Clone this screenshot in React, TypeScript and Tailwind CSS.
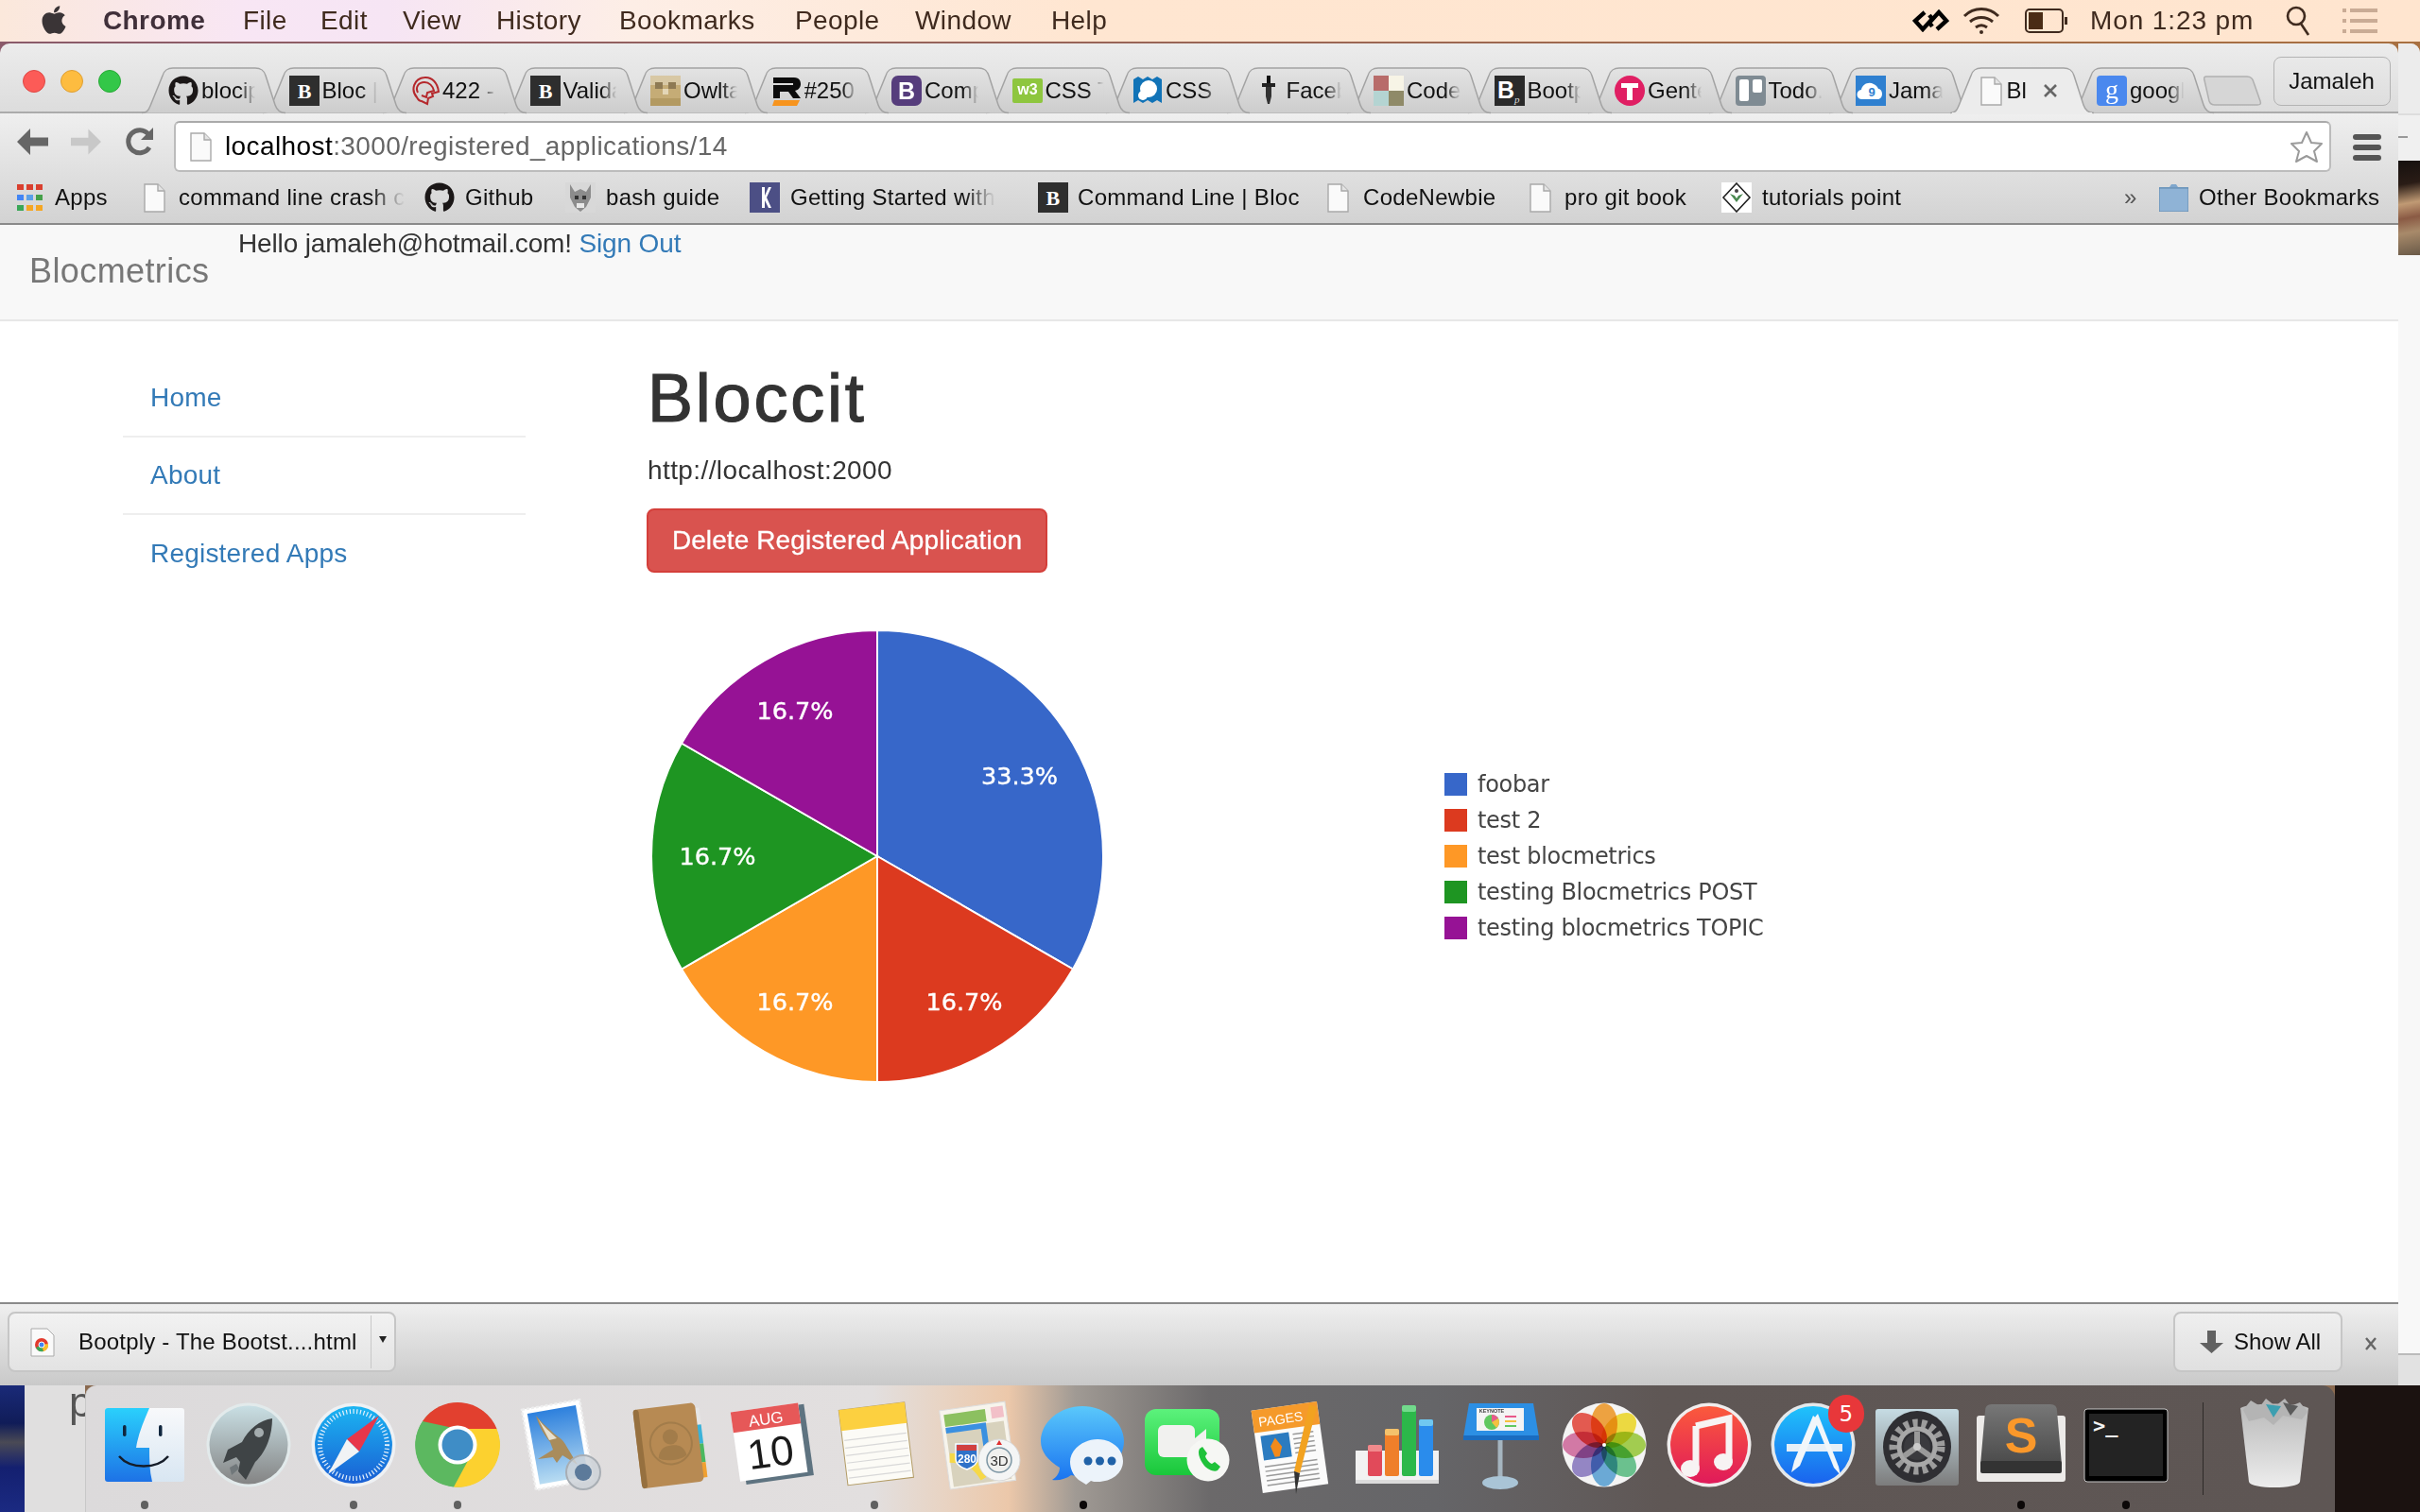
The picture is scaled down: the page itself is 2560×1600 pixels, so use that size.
import React from "react";
import { FaApple, FaGithub } from "react-icons/fa";

const Fav = ({ k }: { k: string }) => {
  const s = { width: 32, height: 32, viewBox: "0 0 32 32", className: "flex-none" };
  switch (k) {
    case "gh":
      return <FaGithub className="flex-none w-[32px] h-[32px] text-[#1b1717]" />;
    case "b":
      return (
        <svg {...s}>
          <rect width="32" height="32" fill="#2e2e2e" />
          <text x="16" y="24" textAnchor="middle" fontSize="22" fontWeight="700" fill="#fff" fontFamily="Liberation Serif">B</text>
        </svg>
      );
    case "422":
      return (
        <svg {...s} fill="none" stroke="#b5282c" strokeWidth="2">
          <path d="M8 23C1 15 5 3 16 2c8-1 14 6 15 15l-7 2 1 3-5 2-1 6-6-3c-2 0-4-2-5-4z" />
          <path d="M9 18C6 12 10 7 16 7c5 0 9 4 10 9l-7 2-1 5-5-2" />
        </svg>
      );
    case "owl":
      return (
        <svg {...s}>
          <rect width="32" height="32" fill="#c5ac76" />
          <rect x="0" y="0" width="32" height="10" fill="#d8c8a4" />
          <rect x="5" y="7" width="8" height="7" fill="#8e7a54" />
          <rect x="19" y="7" width="8" height="7" fill="#8e7a54" />
          <rect x="13" y="14" width="6" height="6" fill="#e3d6b6" />
          <rect x="0" y="24" width="32" height="8" fill="#b39a62" />
        </svg>
      );
    case "r":
      return (
        <svg {...s}>
          <path d="M2 2h22c6 0 7 4 7 7s-2 6-6 7l6 8h-8l-5-7H9v7H2V10h21V8H2z" fill="#0c0c0c" />
          <path d="M3 26h27l-3 6H1z" fill="#f7941e" />
        </svg>
      );
    case "bs":
      return (
        <svg {...s}>
          <rect width="32" height="32" rx="7" fill="#563d7c" />
          <text x="16" y="25" textAnchor="middle" fontSize="25" fontWeight="700" fill="#fff" fontFamily="Liberation Sans">B</text>
        </svg>
      );
    case "w3":
      return (
        <svg {...s}>
          <rect width="32" height="26" y="3" rx="2" fill="#8ec63f" />
          <text x="16" y="20" textAnchor="middle" fontSize="16" fontWeight="700" fill="#fff" fontFamily="Liberation Sans">w3</text>
        </svg>
      );
    case "css":
      return (
        <svg {...s}>
          <path d="M1 4l5-3 5 3 5-3 5 3 5-3 5 3v25l-5-3-5 3-5-3-5 3-5-3-5 3z" fill="#1173b7" />
          <circle cx="17" cy="14" r="9" fill="#fff" />
          <circle cx="11" cy="21" r="5" fill="#fff" />
        </svg>
      );
    case "drop":
      return (
        <svg {...s}>
          <rect x="14" y="0" width="4" height="9" fill="#111" />
          <rect x="9" y="8" width="14" height="4" fill="#222" />
          <path d="M13 12h6v10l-2 8h-2l-2-8z" fill="#333" />
        </svg>
      );
    case "code":
      return (
        <svg {...s}>
          <rect width="16" height="16" fill="#b86c6a" />
          <rect x="16" width="16" height="16" fill="#f7f4e6" />
          <rect y="16" width="16" height="16" fill="#b4d4d2" />
          <rect x="16" y="16" width="16" height="16" fill="#8f8a68" />
        </svg>
      );
    case "bp":
      return (
        <svg {...s}>
          <rect width="32" height="32" fill="#2a2a2a" />
          <text x="3" y="24" fontSize="25" fontWeight="700" fill="#fff" fontFamily="Liberation Sans">B</text>
          <text x="21" y="29" fontSize="11" fontStyle="italic" fill="#ddd" fontFamily="Liberation Serif">p</text>
        </svg>
      );
    case "t":
      return (
        <svg {...s}>
          <circle cx="16" cy="16" r="16" fill="#e01f63" />
          <path d="M7 8h18v5h-6v13h-6V13H7z" fill="#fff" />
        </svg>
      );
    case "trello":
      return (
        <svg {...s}>
          <rect width="32" height="32" rx="4" fill="#7f8b93" />
          <rect x="4" y="4" width="10" height="23" rx="2" fill="#fff" />
          <rect x="18" y="4" width="10" height="14" rx="2" fill="#fff" />
        </svg>
      );
    case "cloud":
      return (
        <svg {...s}>
          <rect width="32" height="32" fill="#2f80d0" />
          <path d="M7 25a5 5 0 0 1-1-10c1-6 8-9 13-6 3 1 4 3 5 5 5 0 6 11-1 11z" fill="#fff" />
          <text x="17" y="22" textAnchor="middle" fontSize="13" fontWeight="700" fill="#2f80d0" fontFamily="Liberation Sans">9</text>
        </svg>
      );
    case "doc":
      return <Doc />;
    case "g":
      return (
        <svg {...s}>
          <rect width="32" height="32" rx="4" fill="#4a88ee" />
          <text x="16" y="24" textAnchor="middle" fontSize="28" fill="#fff" fontFamily="Liberation Serif">g</text>
        </svg>
      );
    case "bash":
      return (
        <svg {...s}>
          <rect width="32" height="32" fill="#d8d8d8" />
          <path d="M5 2l5 8 6-3 6 3 5-8v14l-5 10-6 5-6-5-5-10z" fill="#8c8c8c" />
          <rect x="10" y="14" width="4" height="4" fill="#333" />
          <rect x="18" y="14" width="4" height="4" fill="#333" />
          <rect x="12" y="22" width="8" height="5" fill="#e8e8e8" />
        </svg>
      );
    case "hexo":
      return (
        <svg {...s}>
          <rect width="32" height="32" fill="#4c4f85" />
          <path d="M13 5h3v9l4-9h3l-5 11 5 11h-3l-4-8v8h-3z" fill="#fff" />
        </svg>
      );
    case "tp":
      return (
        <svg {...s}>
          <rect width="32" height="32" fill="#fff" />
          <path d="M16 1l14 15-14 15L2 16z" fill="#fff" stroke="#222" strokeWidth="1.6" />
          <path d="M9 12l7 9 7-9-5 2-2 3-2-3z" fill="#4b8a52" />
          <circle cx="16" cy="9" r="2" fill="#444" />
        </svg>
      );
    default:
      return null;
  }
};

const Doc = () => (
  <svg width="23" height="31" viewBox="0 0 23 31" className="flex-none">
    <path d="M1 1h14l7 7v22H1z" fill="#fafafa" stroke="#a9a9a9" strokeWidth="1.4" />
    <path d="M15 1v7h7" fill="#e4e4e4" stroke="#a9a9a9" strokeWidth="1.4" />
  </svg>
);

const TABS = [
  ["gh", "blocip"], ["b", "Bloc | "], ["422", "422 - "], ["b", "Valida"], ["owl", "Owlta"], ["r", "#250 "],
  ["bs", "Comp"], ["w3", "CSS T"], ["css", "CSS r"], ["drop", "Faceb"], ["code", "Code"], ["bp", "Bootp"],
  ["t", "Gente"], ["trello", "Todo."], ["cloud", "Jamal"], ["doc", "Bl"], ["g", "googl"],
];

const Tab = ({ k, t, i }: { k: string; t: string; i: number }) => {
  const active = i === 15;
  return (
    <div className="relative flex-none w-[127.5px] h-[50px]" style={{ zIndex: active ? 200 : 100 - i }}>
      <svg width="152" height="50" viewBox="0 0 152 50" className="absolute left-0 top-0">
        <path
          d="M0 48.5C5 48.5 7 46 9 41L22 9C24 3 27 1 33 1H120C126 1 129 3 131 9L141 40C143 46 146 48.5 152 48.5"
          fill={active ? "#ececec" : "url(#tabg)"}
          stroke="#a3a3a3"
          strokeWidth="1.5"
        />
        {active && <rect x="2" y="48" width="148" height="2" fill="#ececec" />}
      </svg>
      <div className="relative flex items-center h-[48px] pl-[28px] pt-[2px]">
        <div className={active ? "w-[32px] flex justify-center" : "w-[32px]"}>
          <Fav k={k} />
        </div>
        <div
          className={
            active
              ? "ml-[0px] w-[30px] whitespace-nowrap text-[24px] text-[#111]"
              : "ml-[3px] w-[72px] whitespace-pre text-[24px] text-[#111] [mask-image:linear-gradient(90deg,#000_62%,transparent_88%)]"
          }
        >
          {t}
        </div>
        {active && (
          <svg width="16" height="16" viewBox="0 0 16 16" className="ml-[8px]">
            <path d="M2 2l12 12M14 2L2 14" stroke="#666" strokeWidth="2.6" />
          </svg>
        )}
      </div>
    </div>
  );
};

const MenuBar = () => (
  <div className="flex-none h-[44px] flex items-center pl-[41px] pr-[45px] text-[28px] tracking-[0.4px] text-[#3f2a1e] bg-[linear-gradient(90deg,#fbe8db_0%,#f8e6f4_10%,#f6e5f4_16%,#fdeee6_26%,#ffe6d1_45%,#ffe5cf_100%)]">
    <div className="w-[68px]">
      <FaApple className="w-[32px] h-[34px] text-[#3a3436] -mt-[2px]" />
    </div>
    <div className="w-[148px] font-bold text-[#40303a]">Chrome</div>
    <div className="w-[82px]">File</div>
    <div className="w-[87px]">Edit</div>
    <div className="w-[99px]">View</div>
    <div className="w-[130px]">History</div>
    <div className="w-[186px]">Bookmarks</div>
    <div className="w-[127px]">People</div>
    <div className="w-[144px]">Window</div>
    <div className="flex-1">Help</div>
    <svg width="39" height="24" viewBox="0 0 39 24" fill="none" stroke="#000" strokeWidth="4.4">
      <path d="M13 3L3 12l8 9 10-11-3-4M26 21l10-9-8-9-10 11 3 4" />
    </svg>
    <svg width="42" height="30" viewBox="0 0 42 30" fill="none" stroke="#3f2a1e" strokeWidth="3" className="ml-[13px]">
      <path d="M3 10c10-10 26-10 36 0M9 16c7-6 17-6 24 0M15 22c4-3 8-3 12 0" />
      <circle cx="21" cy="27" r="2" fill="#3f2a1e" stroke="none" />
    </svg>
    <svg width="46" height="26" viewBox="0 0 46 26" className="ml-[25px]">
      <rect x="1" y="1" width="39" height="24" rx="4" fill="none" stroke="#3f2a1e" strokeWidth="2" />
      <rect x="4" y="4" width="15" height="18" fill="#4a2c16" />
      <rect x="42" y="9" width="3" height="8" fill="#3f2a1e" />
    </svg>
    <div className="ml-[23px] w-[171px] whitespace-nowrap tracking-[0.9px]">Mon 1:23 pm</div>
    <svg width="27" height="32" viewBox="0 0 27 32" fill="none" stroke="#3f2a1e" strokeWidth="2.6" className="ml-[36px]">
      <circle cx="11" cy="11" r="9" />
      <path d="M16 19l8 12" />
    </svg>
    <svg width="37" height="26" viewBox="0 0 37 26" fill="#c9ab95" className="ml-[33px]">
      <rect y="0" width="4" height="4" /><rect x="8" y="0" width="29" height="4" />
      <rect y="11" width="4" height="4" /><rect x="8" y="11" width="29" height="4" />
      <rect y="22" width="4" height="4" /><rect x="8" y="22" width="29" height="4" />
    </svg>
  </div>
);

const TitleRow = () => (
  <div className="flex-none h-[74px] flex pl-[24px] border-b-2 border-[#ababab] relative">
    <div className="flex gap-[16px] mt-[28px] h-[24px]">
      <div className="w-[24px] h-[24px] rounded-full bg-[#fc5b57] border border-[#df4744]" />
      <div className="w-[24px] h-[24px] rounded-full bg-[#fdbc40] border border-[#de9f34]" />
      <div className="w-[24px] h-[24px] rounded-full bg-[#33c748] border border-[#27aa35]" />
    </div>
    <div className="ml-[22px] flex mt-[25px] h-[50px] relative">
      {TABS.map((x, i) => (
        <Tab key={i} k={x[0]} t={x[1]} i={i} />
      ))}
    </div>
    <svg width="64" height="34" viewBox="0 0 64 34" className="ml-[13px] mt-[33px]">
      <path d="M3 2H46C50 2 52 4 53 8L60 28C61 31 60 32 57 32H12C9 32 7 31 6 28L1 6C0 3 1 2 3 2Z" fill="#d6d6d6" stroke="#b0b0b0" strokeWidth="1.5" />
    </svg>
    <div className="ml-[10px] mt-[14px] w-[124px] h-[52px] rounded-[8px] border border-[#b3b3b3] flex items-center justify-center text-[24px] text-[#111]">
      Jamaleh
    </div>
  </div>
);

const Toolbar = () => (
  <div className="flex-none h-[62px] flex items-start pl-[18px] pt-[8px]">
    <svg width="33" height="28" viewBox="0 0 33 28" className="mt-[8px]">
      <path d="M14 0L0 14l14 14V18.500h19v-9H14z" fill="#666" />
    </svg>
    <svg width="32" height="28" viewBox="0 0 33 28" className="ml-[24px] mt-[8px]">
      <path d="M19 0l14 14-14 14V18.500H0v-9h19z" fill="#c8c8c8" />
    </svg>
    <svg width="30" height="30" viewBox="0 0 30 30" fill="none" className="ml-[26px] mt-[7px]">
      <path d="M25 21A12 12 0 1 1 24 7" stroke="#666" strokeWidth="5" />
      <path d="M29 0v13H16z" fill="#666" />
    </svg>
    <div className="ml-[21px] w-[2282px] h-[54px] bg-white rounded-[6px] border-2 border-[#bcbcbc] border-t-[#aaa] flex items-center pl-[15px] pr-[6px]">
      <Doc />
      <div className="ml-[14px] text-[28px] tracking-[0.4px] whitespace-nowrap text-[#666]">
        <span className="text-black">localhost</span>:3000/registered_applications/14
      </div>
      <svg width="36" height="34" viewBox="0 0 36 34" className="ml-auto" fill="#fff" stroke="#9a9a9a" strokeWidth="2">
        <path d="M18 2l5 11 11 1-8 8 3 11-11-6-11 6 3-11-8-8 11-1z" strokeLinejoin="round" />
      </svg>
    </div>
    <div className="ml-[23px] mt-[14px] w-[30px] flex flex-col gap-[5px]">
      <div className="h-[6px] rounded-[3px] bg-[#555]" />
      <div className="h-[6px] rounded-[3px] bg-[#555]" />
      <div className="h-[6px] rounded-[3px] bg-[#555]" />
    </div>
  </div>
);

const Mark = ({ w, slot, icon, children, fade }: { w: string; slot: string; icon: React.ReactNode; children: React.ReactNode; fade?: boolean }) => (
  <div className={`flex-none flex items-center ${w}`}>
    <div className={`flex-none flex items-center ${slot}`}>{icon}</div>
    <div
      className={
        fade
          ? "whitespace-nowrap [mask-image:linear-gradient(90deg,#000_85%,transparent)]"
          : "whitespace-nowrap"
      }
    >
      {children}
    </div>
  </div>
);

const AppsIcon = () => (
  <svg width="27" height="28" viewBox="0 0 27 28">
    {[
      [0, 0, "#d9402f"], [10, 0, "#d9402f"], [20, 0, "#d9402f"],
      [0, 11, "#4285f4"], [10, 11, "#5aa0e8"], [20, 11, "#45a049"],
      [0, 22, "#3aa757"], [10, 22, "#f5a623"], [20, 22, "#f5a623"],
    ].map((r, i) => (
      <rect key={i} x={r[0] as number} y={r[1] as number} width="7" height="6" fill={r[2] as string} />
    ))}
  </svg>
);

const Bookmarks = () => (
  <div className="flex-none h-[56px] flex items-center pl-[18px] border-b-2 border-[#8a8a8a] text-[24px] tracking-[0.3px] text-[#111]">
    <Mark w="w-[134px]" slot="w-[40px]" icon={<AppsIcon />}>Apps</Mark>
    <Mark w="w-[297px]" slot="w-[37px]" icon={<Doc />} fade>command line crash c</Mark>
    <Mark w="w-[149px]" slot="w-[43px]" icon={<Fav k="gh" />}>Github</Mark>
    <Mark w="w-[195px]" slot="w-[43px]" icon={<Fav k="bash" />}>bash guide</Mark>
    <Mark w="w-[305px]" slot="w-[43px]" icon={<Fav k="hexo" />} fade>Getting Started with</Mark>
    <Mark w="w-[306px]" slot="w-[42px]" icon={<Fav k="b" />}>Command Line | Bloc</Mark>
    <Mark w="w-[214px]" slot="w-[38px]" icon={<Doc />}>CodeNewbie</Mark>
    <Mark w="w-[203px]" slot="w-[37px]" icon={<Doc />}>pro git book</Mark>
    <Mark w="w-[426px]" slot="w-[43px]" icon={<Fav k="tp" />}>tutorials point</Mark>
    <div className="w-[37px] text-[#555]">»</div>
    <Mark w="w-[232px]" slot="w-[42px]" icon={
      <svg width="31" height="30" viewBox="0 0 31 30">
        <path d="M0 4h11l2-3h5l2 3h11v26H0z" fill="#7fa6cc" />
        <rect x="0" y="5" width="31" height="25" fill="#8fb3d6" stroke="#5f87ad" />
      </svg>
    }>Other Bookmarks</Mark>
  </div>
);

const LINK = "text-[#337ab7]";

const Slice = ({ d, fill }: { d: string; fill: string }) => <path d={d} fill={fill} stroke="#fff" strokeWidth="2" />;

const Pie = () => {
  const pt = (a: number) => {
    const r = (a * Math.PI) / 180;
    return `${(240 + 239 * Math.sin(r)).toFixed(2)} ${(240 - 239 * Math.cos(r)).toFixed(2)}`;
  };
  const wedge = (a: number, b: number) => `M240 240L${pt(a)}A239 239 0 0 1 ${pt(b)}Z`;
  const lab = [
    [390.5, 155, "33.3%"], [332, 394, "16.7%"], [153, 394, "16.7%"], [71, 240, "16.7%"], [153, 86, "16.7%"],
  ];
  return (
    <svg width="480" height="480" viewBox="0 0 480 480" className="flex-none">
      <Slice d={wedge(0, 120)} fill="#3767c9" />
      <Slice d={wedge(120, 180)} fill="#dc3a1f" />
      <Slice d={wedge(180, 240)} fill="#fe9826" />
      <Slice d={wedge(240, 300)} fill="#1e9522" />
      <Slice d={wedge(300, 360)} fill="#961295" />
      {lab.map((l, i) => (
        <text key={i} x={l[0] as number} y={(l[1] as number) + 9} textAnchor="middle" fontSize="25.500" fill="#fff" stroke="#fff" strokeWidth="0.4" fontFamily="DejaVu Sans">
          {l[2]}
        </text>
      ))}
    </svg>
  );
};

const LEGEND = [
  ["bg-[#3767c9]", "foobar"],
  ["bg-[#dc3a1f]", "test 2"],
  ["bg-[#fe9826]", "test blocmetrics"],
  ["bg-[#1e9522]", "testing Blocmetrics POST"],
  ["bg-[#961295]", "testing blocmetrics TOPIC"],
];

const Page = () => (
  <div className="flex-1 min-h-0 bg-white text-[28px] text-[#333]">
    <div className="h-[102px] bg-[#f8f8f8] border-b-2 border-[#e7e7e7] flex items-start pl-[31px]">
      <div className="w-[221px] mt-[29px] text-[36px] leading-[40px] tracking-[0.4px] text-[#777]">Blocmetrics</div>
      <div className="leading-[40px] tracking-[-0.15px]">
        Hello jamaleh@hotmail.com! <span className={LINK}>Sign Out</span>
      </div>
    </div>
    <div className="flex pl-[130px] pt-[41px]">
      <div className="w-[426px] flex-none tracking-[0.2px]">
        <div className={`h-[82px] pl-[29px] flex items-center border-b-2 border-[#eee] ${LINK}`}>Home</div>
        <div className={`h-[82px] pl-[29px] flex items-center border-b-2 border-[#eee] ${LINK}`}>About</div>
        <div className={`h-[82px] pl-[29px] flex items-center ${LINK}`}>Registered Apps</div>
      </div>
      <div className="ml-[129px]">
        <div className="text-[72px] leading-[80px] tracking-[2.8px] [-webkit-text-stroke:1.2px_#333] text-[#333]">Bloccit</div>
        <div className="mt-[17px] leading-[40px] tracking-[0.4px]">http://localhost:2000</div>
        <div className="mt-[20px] -ml-[1px] w-[424px] h-[68px] rounded-[8px] bg-[#d9534f] border-2 border-[#d43f3a] flex items-center justify-center text-white tracking-[0.1px] [-webkit-text-stroke:0.3px_#fff]">
          Delete Registered Application
        </div>
        <div className="flex mt-[60px] ml-[3px]">
          <Pie />
          <div className="ml-[360px] mt-[152px] font-['DejaVu_Sans'] text-[24px] tracking-[-0.3px] text-[#444]">
            {LEGEND.map((l) => (
              <div key={l[1]} className="h-[38px] flex items-start whitespace-nowrap">
                <div className={`w-[24px] h-[24px] flex-none ${l[0]}`} />
                <div className="ml-[11px] leading-[24px]">{l[1]}</div>
              </div>
            ))}
          </div>
        </div>
      </div>
    </div>
  </div>
);

const DownloadBar = () => (
  <div className="flex-none h-[88px] border-t-2 border-[#8a8a8a] bg-[linear-gradient(180deg,#efefef,#c9c9c9)] flex items-start pl-[8px] pt-[8px] text-[24px] text-[#111]">
    <div className="w-[411px] h-[64px] rounded-[8px] border-2 border-[#c6c6c6] bg-[linear-gradient(180deg,#f2f2f2,#e3e3e3)] flex items-center pl-[22px]">
      <svg width="26" height="31" viewBox="0 0 26 31" className="flex-none">
        <path d="M1 1h17l7 7v22H1z" fill="#fafafa" stroke="#aaa" />
        <circle cx="12" cy="18" r="7" fill="#e33b2e" />
        <path d="M12 18l-6 3a7 7 0 0 0 8 4z" fill="#3aa757" />
        <path d="M12 18l7-1a7 7 0 0 1-5 8z" fill="#fbc02d" />
        <circle cx="12" cy="18" r="3" fill="#4285f4" stroke="#fff" />
      </svg>
      <div className="ml-[25px] w-[309px] whitespace-nowrap tracking-[0.2px]">Bootply - The Bootst....html</div>
      <div className="w-[1px] h-[56px] bg-[#c8c8c8]" />
      <div className="ml-[8px] w-0 h-0 border-l-[4px] border-r-[4px] border-t-[7px] border-l-transparent border-r-transparent border-t-[#222] -mt-[6px]" />
    </div>
    <div className="ml-auto w-[179px] h-[64px] rounded-[8px] border-2 border-[#c6c6c6] bg-[linear-gradient(180deg,#efefef,#e0e0e0)] flex items-center pl-[26px]">
      <svg width="25" height="24" viewBox="0 0 25 24" className="flex-none">
        <path d="M8 0h9v13h8L12.500 24 0 13h8z" fill="#616161" />
      </svg>
      <div className="ml-[11px]">Show All</div>
    </div>
    <svg width="16" height="16" viewBox="0 0 16 16" className="ml-[22px] mr-[21px] mt-[26px] flex-none">
      <path d="M3 2l10 12M13 2L3 14" stroke="#666" strokeWidth="2.4" />
    </svg>
  </div>
);

const S = 110;
const Icon = ({ children }: { children: React.ReactNode }) => (
  <svg width={S} height={S} viewBox="0 0 110 110" className="flex-none overflow-visible">
    {children}
  </svg>
);

const Defs = () => (
  <svg width="0" height="0" className="absolute">
    <defs>
      <linearGradient id="tabg" x1="0" y1="0" x2="0" y2="1"><stop offset="0" stopColor="#e3e3e3" /><stop offset="1" stopColor="#cdcdcd" /></linearGradient>
      <linearGradient id="fL" x1="0" y1="0" x2="0" y2="1"><stop offset="0" stopColor="#2ad0fc" /><stop offset="1" stopColor="#1d72e6" /></linearGradient>
      <linearGradient id="fR" x1="0" y1="0" x2="0" y2="1"><stop offset="0" stopColor="#f8f9fb" /><stop offset="1" stopColor="#d8e6f2" /></linearGradient>
      <linearGradient id="lp" x1="0" y1="0" x2="0" y2="1"><stop offset="0" stopColor="#c9dfe4" /><stop offset="1" stopColor="#848484" /></linearGradient>
      <linearGradient id="sf" x1="0" y1="0" x2="0" y2="1"><stop offset="0" stopColor="#1bb5f2" /><stop offset="1" stopColor="#1a5fd4" /></linearGradient>
      <linearGradient id="msg" x1="0" y1="0" x2="0" y2="1"><stop offset="0" stopColor="#5ac8fb" /><stop offset="1" stopColor="#1a74f0" /></linearGradient>
      <linearGradient id="ft" x1="0" y1="0" x2="0" y2="1"><stop offset="0" stopColor="#5cf27c" /><stop offset="1" stopColor="#19c73a" /></linearGradient>
      <linearGradient id="mus" x1="0" y1="0" x2="0" y2="1"><stop offset="0" stopColor="#fb5a3c" /><stop offset="1" stopColor="#e01a5a" /></linearGradient>
      <linearGradient id="app" x1="0" y1="0" x2="0" y2="1"><stop offset="0" stopColor="#1fc3fb" /><stop offset="1" stopColor="#1a63ee" /></linearGradient>
      <linearGradient id="sys" x1="0" y1="0" x2="0" y2="1"><stop offset="0" stopColor="#c6dce4" /><stop offset="1" stopColor="#7c7c7c" /></linearGradient>
      <linearGradient id="sub" x1="0" y1="0" x2="0" y2="1"><stop offset="0" stopColor="#777" /><stop offset="1" stopColor="#4a4a4a" /></linearGradient>
      <linearGradient id="trash" x1="0" y1="0" x2="0" y2="1"><stop offset="0" stopColor="#b9b9b9" /><stop offset="1" stopColor="#ededed" /></linearGradient>
      <linearGradient id="sky" x1="0" y1="0" x2="0" y2="1"><stop offset="0" stopColor="#2d80dd" /><stop offset="1" stopColor="#b8dcf2" /></linearGradient>
    </defs>
  </svg>
);

const Finder = () => (
  <Icon>
    <rect x="13" y="16" width="84" height="78" rx="3" fill="url(#fR)" />
    <path d="M16 16H60C54 30 48 44 46 58H60C60 70 60 82 63 94H16A3 3 0 0 1 13 91V19A3 3 0 0 1 16 16Z" fill="url(#fL)" />
    <rect x="32" y="34" width="3.500" height="12" rx="1.700" fill="#10263e" />
    <rect x="70" y="34" width="3.500" height="12" rx="1.700" fill="#10263e" />
    <path d="M28 67C40 81 68 81 80 67" fill="none" stroke="#151c28" strokeWidth="2.500" />
  </Icon>
);
const Launch = () => (
  <Icon>
    <circle cx="55" cy="55" r="44.500" fill="#e2eaeb" />
    <circle cx="55" cy="55" r="41.500" fill="url(#lp)" />
    <path d="M80 27C67 29 55 38 48 52L33 60 28 74 42 68 46 73 44 83 52 92 62 73C74 62 80 44 80 27Z" fill="#3f4446" />
    <circle cx="66" cy="42" r="5" fill="#a4acae" />
    <path d="M42 75l-7 4 2 8 8-7z" fill="#70777a" />
  </Icon>
);
const Safari = () => (
  <Icon>
    <circle cx="55" cy="55" r="44.500" fill="#eef1f4" />
    <circle cx="55" cy="55" r="41" fill="url(#sf)" />
    <circle cx="55" cy="55" r="35.500" fill="none" stroke="#e6f1fb" strokeWidth="5" strokeDasharray="1.200 2.500" />
    <path d="M82 24L61 62 48 49Z" fill="#e8364a" />
    <path d="M28 86L61 62 48 49Z" fill="#f1f3f5" />
  </Icon>
);
const Chrome = () => (
  <Icon>
    <circle cx="55" cy="55" r="44.500" fill="#5cb860" />
    <path d="M18 30A44.500 44.500 0 0 1 96.500 38L55 38Z" fill="#e2402f" />
    <path d="M96.500 38A44.500 44.500 0 0 1 51 99.500L68 68 55 38Z" fill="#fcd12f" />
    <path d="M18 30L37 61 51 99.500A44.500 44.500 0 0 1 18 30Z" fill="#5cb860" />
    <circle cx="55" cy="55" r="20.500" fill="#fff" />
    <circle cx="55" cy="55" r="16.500" fill="#3f8dc6" />
  </Icon>
);
const Mail = () => (
  <Icon>
    <g transform="rotate(-10 50 55)">
      <rect x="20" y="12" width="62" height="86" fill="#fff" stroke="#eee" strokeWidth="2.500" strokeDasharray="3 2" />
      <rect x="25" y="17" width="52" height="76" fill="url(#sky)" />
    </g>
    <path d="M28 24C32 38 38 46 43 52L46 60 30 70 46 68 50 74 56 66 72 76 60 56C56 48 50 46 46 42 40 36 34 32 28 24Z" fill="#a98c5c" />
    <path d="M30 27L42 50 50 48C44 42 36 36 30 27Z" fill="#e8e0ce" />
    <circle cx="78" cy="84" r="18" fill="#ccd2d8" fillOpacity="0.850" stroke="#a8aeb4" strokeWidth="2" />
    <circle cx="78" cy="84" r="9" fill="#5c7a9a" />
  </Icon>
);
const Contacts = () => (
  <Icon>
    <g transform="rotate(-7 55 55)">
      <rect x="88" y="20" width="6" height="18" fill="#e6e6e6" />
      <rect x="88" y="38" width="6" height="20" fill="#3bb2d8" />
      <rect x="88" y="58" width="6" height="20" fill="#4bb860" />
      <rect x="88" y="78" width="6" height="16" fill="#f0a030" />
      <rect x="24" y="14" width="66" height="84" rx="5" fill="#b78a53" />
      <rect x="24" y="14" width="6" height="84" rx="3" fill="#96703f" />
      <circle cx="60" cy="54" r="22" fill="none" stroke="#a27c4a" strokeWidth="2" />
      <circle cx="60" cy="47" r="8" fill="#a27c4a" />
      <path d="M45 68c2-10 8-12 15-12s13 2 15 12c-5 5-25 5-30 0z" fill="#a27c4a" />
    </g>
  </Icon>
);
const Calendar = () => (
  <Icon>
    <g transform="rotate(-8 55 55)">
      <rect x="24" y="17" width="72" height="76" fill="#5e7380" />
      <rect x="18" y="15" width="72" height="74" fill="#fff" />
      <rect x="18" y="15" width="72" height="22" fill="#e65858" />
      <text x="54" y="33" textAnchor="middle" fontSize="17" fill="#fff" fontFamily="Liberation Sans">AUG</text>
      <text x="54" y="78" textAnchor="middle" fontSize="44" fill="#1a1a1a" fontFamily="Liberation Sans">10</text>
    </g>
  </Icon>
);
const Notes = () => (
  <Icon>
    <g transform="rotate(-7 55 55)">
      <rect x="22" y="14" width="70" height="80" fill="#fcfbf6" stroke="#b29b64" strokeWidth="1" />
      <rect x="22" y="14" width="70" height="22" fill="#fcd040" />
      {[46, 54, 62, 70, 78, 86].map((y) => (
        <rect key={y} x="24" y={y} width="66" height="1.200" fill="#d8d8d8" />
      ))}
    </g>
  </Icon>
);
const Maps = () => (
  <Icon>
    <g transform="rotate(-8 50 55)">
      <rect x="18" y="14" width="70" height="84" fill="#f7f4ec" stroke="#ddd" />
      <rect x="22" y="19" width="44" height="13" fill="#8cc060" />
      <rect x="72" y="18" width="13" height="12" fill="#f2c0c8" />
      <rect x="22" y="34" width="62" height="62" fill="#d8d2bd" />
      <path d="M22 36h40v34" fill="none" stroke="#3a90e0" strokeWidth="6" />
      <path d="M22 65c20 3 28 12 34 26" fill="none" stroke="#f6d848" strokeWidth="10" />
    </g>
    <path d="M30 54h23v16c0 6-6 9-11 11-6-2-12-5-12-11z" fill="#2f72c8" stroke="#fff" strokeWidth="1.500" />
    <rect x="31" y="55" width="21" height="6" fill="#d04040" />
    <text x="42" y="74" textAnchor="middle" fontSize="12" fontWeight="700" fill="#fff" fontFamily="Liberation Sans">280</text>
    <circle cx="76" cy="71" r="22" fill="#f4f5f5" stroke="#d8d8d8" />
    <circle cx="76" cy="71" r="13" fill="#f0f0ee" stroke="#7d96a4" strokeWidth="1.500" />
    <text x="76" y="77" textAnchor="middle" fontSize="15" fill="#333" fontFamily="Liberation Sans">3D</text>
    <path d="M76 50l3 5h-6z" fill="#e03030" />
  </Icon>
);
const Messages = () => (
  <Icon>
    <path d="M54 14c24 0 44 17 44 37 0 21-20 37-44 37-4 0-8 0-12-1-5 4-13 6-20 5 5-3 8-8 8-13C17 71 10 62 10 51c0-20 20-37 44-37Z" fill="url(#msg)" />
    <path d="M68 54c15 0 27 10 27 23s-12 22-27 22c-3 0-5 0-7-1l-5 4-8-5c-6-5-9-12-9-19 0-13 14-24 29-24Z" transform="translate(2 -5)" fill="#ecf3fa" />
    <circle cx="60" cy="72" r="4.500" fill="#2062a8" />
    <circle cx="72.500" cy="72" r="4.500" fill="#2062a8" />
    <circle cx="85" cy="72" r="4.500" fill="#2062a8" />
  </Icon>
);
const FaceTime = () => (
  <Icon>
    <rect x="10" y="17" width="79" height="70" rx="12" fill="url(#ft)" />
    <rect x="24" y="34" width="39" height="34" rx="6" fill="#f1f1ef" />
    <path d="M63 48l12-10v28l-12-8z" fill="#f1f1ef" />
    <circle cx="77" cy="71" r="22.500" fill="#f6f7f4" />
    <path d="M68 59c-3 5 1 13 5 18 4 4 10 7 14 5l3-4-6-5-3 2c-3-1-6-5-7-8l2-3-5-7z" fill="#1fc23a" />
  </Icon>
);
const Pages = () => (
  <Icon>
    <g transform="rotate(-8 50 55)">
      <rect x="18" y="14" width="70" height="88" fill="#fbfbfb" />
      <rect x="18" y="14" width="70" height="24" fill="#f59a2b" />
      <text x="24" y="32" fontSize="14" fill="#fff" fontFamily="Liberation Sans">PAGES</text>
      <rect x="24" y="42" width="30" height="26" fill="#2b7bc0" />
      <path d="M39 46l6 10-4 10h-5l-3-12z" fill="#f28a1c" />
      {[74, 79, 84, 89, 94].map((y) => (
        <rect key={y} x="24" y={y} width="56" height="1.500" fill="#999" />
      ))}
      {[44, 49, 54, 59, 64].map((y) => (
        <rect key={y} x="58" y={y} width="22" height="1.500" fill="#999" />
      ))}
    </g>
    <path d="M74 12l8 3-18 70-6-2z" fill="#f2a220" />
    <path d="M58 83l6 2-4 22z" fill="#333" />
  </Icon>
);
const Numbers = () => (
  <Icon>
    <rect x="12" y="61" width="88" height="35" fill="#f2f2f2" />
    <rect x="12" y="92" width="88" height="4" fill="#dcdcdc" />
    <rect x="25" y="55" width="15" height="33" rx="2" fill="#e14a5a" />
    <rect x="25" y="55" width="15" height="7" rx="2" fill="#f08a8c" />
    <rect x="43" y="38" width="15" height="50" rx="2" fill="#ef7f2a" />
    <rect x="43" y="38" width="15" height="7" rx="2" fill="#f4c26c" />
    <rect x="61" y="13" width="15" height="75" rx="2" fill="#2cb84a" />
    <rect x="61" y="13" width="15" height="7" rx="2" fill="#72da8c" />
    <rect x="79" y="28" width="15" height="60" rx="2" fill="#2a8cec" />
    <rect x="79" y="28" width="15" height="7" rx="2" fill="#70c8f0" />
  </Icon>
);
const Keynote = () => (
  <Icon>
    <rect x="52.500" y="46" width="5" height="46" fill="#a5b5c0" />
    <ellipse cx="55" cy="95" rx="19" ry="7" fill="#a9c4d6" />
    <path d="M22 11h68l6 36H16z" fill="#2c8fe4" />
    <rect x="16" y="45" width="80" height="5" fill="#1a6cc0" />
    <rect x="30" y="16" width="50" height="24" fill="#f4f4f4" />
    <circle cx="46" cy="31" r="8" fill="#60c860" />
    <path d="M46 31V23a8 8 0 0 1 7 4z" fill="#e85a8a" />
    <path d="M46 31l7-4a8 8 0 0 1-2 10z" fill="#f5c040" />
    <text x="46" y="21" fontSize="5.500" fontWeight="700" fill="#444" fontFamily="Liberation Sans" textAnchor="middle">KEYNOTE</text>
    <rect x="60" y="24" width="12" height="2" fill="#e85a8a" />
    <rect x="60" y="29" width="12" height="2" fill="#f5c040" />
    <rect x="60" y="34" width="12" height="2" fill="#60c860" />
  </Icon>
);
const Photos = () => {
  const cols = ["#f7a030", "#f6e030", "#a0d040", "#60c488", "#60a8dc", "#9080c8", "#d870a4", "#ec4c40"];
  return (
    <Icon>
      <circle cx="55" cy="55" r="44.500" fill="#f4f4f4" />
      {cols.map((c, i) => (
        <ellipse key={c} cx="55" cy="33" rx="14" ry="22" fill={c} fillOpacity="0.900" transform={`rotate(${i * 45} 55 55)`} style={{ mixBlendMode: "multiply" }} />
      ))}
      <circle cx="55" cy="55" r="2" fill="#fff" />
    </Icon>
  );
};
const Music = () => (
  <Icon>
    <circle cx="55" cy="55" r="44.500" fill="#f0eded" />
    <circle cx="55" cy="55" r="41" fill="url(#mus)" />
    <path d="M41 35L76 27V72" fill="none" stroke="#f7f3f3" strokeWidth="7" />
    <path d="M41 35V79" fill="none" stroke="#f7f3f3" strokeWidth="7" />
    <ellipse cx="35" cy="80" rx="10" ry="9" fill="#f7f3f3" />
    <ellipse cx="70" cy="73" rx="10" ry="9" fill="#f7f3f3" />
  </Icon>
);
const AppStore = () => (
  <div className="relative">
    <Icon>
      <circle cx="55" cy="55" r="44.500" fill="#e4e8ea" />
      <circle cx="55" cy="55" r="41" fill="url(#app)" />
      <rect x="27" y="54" width="59" height="8" fill="#e6eff8" />
      <path d="M55 24L35 72l-3 12 9-7 20-48z" fill="#f1f6fa" />
      <path d="M56 27l4-5 22 56 2 9-7-8z" fill="#f1f6fa" />
    </Icon>
    <div className="absolute right-[1px] top-[2px] w-[38px] h-[40px] rounded-full bg-[#e8373a] text-white text-[23px] flex items-center justify-center font-['DejaVu_Sans']">5</div>
  </div>
);
const SysPrefs = () => (
  <Icon>
    <rect x="11" y="17" width="88" height="81" rx="3" fill="url(#sys)" />
    <ellipse cx="55" cy="57" rx="36" ry="38" fill="#2f2f33" />
    <circle cx="55" cy="57" r="24" fill="none" stroke="#9c9c9c" strokeWidth="11" strokeDasharray="5 4" />
    <circle cx="55" cy="57" r="19" fill="none" stroke="#a8a8a8" strokeWidth="5" />
    <circle cx="55" cy="57" r="14" fill="#3a3a3e" />
    <path d="M55 57V41M55 57L41 67M55 57l14 10" stroke="#9a9a9a" strokeWidth="6" />
    <circle cx="55" cy="57" r="4" fill="#ccc" />
  </Icon>
);
const Sublime = () => (
  <Icon>
    <rect x="8" y="24" width="94" height="70" rx="3" fill="#eceae8" />
    <path d="M17 19Q17 12 24 12H86Q93 12 93 19L98 76H12Z" fill="url(#sub)" />
    <rect x="12" y="72" width="86" height="13" rx="2" fill="#333" />
    <text x="55" y="63" textAnchor="middle" fontSize="52" fontWeight="700" fill="#fb982a" fontFamily="Liberation Sans">S</text>
  </Icon>
);
const Terminal = () => (
  <Icon>
    <rect x="11" y="17" width="88" height="77" rx="3" fill="#000" stroke="#c6c6c6" strokeWidth="1" />
    <rect x="16" y="22" width="78" height="66" fill="#232323" />
    <text x="20" y="42" fontSize="22" fontWeight="700" fill="#f4f4f4" fontFamily="DejaVu Sans Mono">&gt;_</text>
  </Icon>
);
const Trash = () => (
  <svg width="90" height="110" viewBox="0 0 90 110" className="flex-none">
    <path d="M9 14C18 8 72 8 81 14L72 92C70 100 20 100 18 92Z" fill="url(#trash)" />
    <path d="M12 16l8-10 10 6 6-8 10 8 10-8 6 8 10-4 8 10-6 8-20-4-10 10-10-8-16 4z" fill="#b4b4b4" />
    <path d="M36 10l8 14 8-12z" fill="#3d9fb0" />
    <path d="M54 8l8 14 8-10z" fill="#5a5a5a" />
  </svg>
);

const DOCK: [React.ComponentType, number][] = [
  [Finder, 1], [Launch, 0], [Safari, 1], [Chrome, 1], [Mail, 0], [Contacts, 0], [Calendar, 0], [Notes, 1], [Maps, 0], [Messages, 2],
  [FaceTime, 0], [Pages, 0], [Numbers, 0], [Keynote, 0], [Photos, 0], [Music, 0], [AppStore, 0], [SysPrefs, 0], [Sublime, 2], [Terminal, 2],
];

const Dock = () => (
  <div className="flex-none flex h-[134px] overflow-hidden">
    <div className="w-[26px] bg-[linear-gradient(180deg,#1a2a78,#101c58_30%,#4a4a55_45%,#142070_65%,#1b2a82)]" />
    <div className="w-[64px] bg-[#e0dfdf] overflow-hidden pl-[47px] text-[#555] text-[44px] leading-[36px]">p</div>
    <div className="w-[2380px] rounded-tl-[12px] rounded-tr-[14px] border-l border-[#c8c8c8] pl-[7px] pt-[8px] flex bg-[linear-gradient(90deg,#dcdadb_0%,#e2dfdf_35%,#e8d4c4_38%,#ecc8aa_41%,#a09a94_44%,#6b696a_50%,#656568_60%,#5f5755_70%,#5e5654_100%)]">
      {DOCK.map(([C, dot], i) => (
        <div key={i} className="w-[110.300px] flex-none flex flex-col items-center">
          <C />
          {dot === 1 && <div className="mt-[4px] w-[8px] h-[9px] rounded-full bg-[#606060]" />}
          {dot === 2 && <div className="mt-[4px] w-[8px] h-[9px] rounded-full bg-[#0c0808]" />}
        </div>
      ))}
      <div className="w-[1px] h-[98px] ml-[26px] mt-[10px] bg-[#2e2a28]" />
      <div className="ml-[30px] mt-[2px]"><Trash /></div>
    </div>
    <div className="flex-1 bg-[#1b1210]" />
  </div>
);

const Sliver = () => (
  <div className="w-[23px] flex-none flex flex-col rounded-tr-[10px] overflow-hidden bg-[#f0f0f0]">
    <div className="h-[76px] bg-[#ececec] border-b-2 border-[#ddd]" />
    <div className="h-[48px] pt-[22px]"><div className="w-[10px] h-[2px] bg-[#999]" /></div>
    <div className="h-[100px] bg-[linear-gradient(170deg,#15100e_0%,#2a1c16_25%,#c09a74_45%,#8a5a44_60%,#a88a6a_75%,#6a5a48_100%)]" />
    <div className="flex-1 bg-[#f8f8f8]" />
    <div className="h-[34px] bg-[#e2e2e2] border-t-2 border-[#bbb]" />
  </div>
);

export default function App() {
  return (
    <div className="w-[2560px] h-[1600px] overflow-hidden flex flex-col font-['Liberation_Sans',sans-serif] bg-[#8a6a50]">
      <Defs />
      <MenuBar />
      <div className="flex-none h-[1422px] flex pt-[2px] bg-[linear-gradient(90deg,#8a5a6a,#a87040)]">
        <div className="w-[2537px] flex-none flex flex-col rounded-t-[10px] overflow-hidden">
          <div className="flex-none relative">
            <div className="bg-[linear-gradient(180deg,#ececec,#dcdcdc)]"><TitleRow /></div>
            <div className="bg-[linear-gradient(180deg,#efefef,#d2d2d2)]">
              <Toolbar />
              <Bookmarks />
            </div>
          </div>
          <Page />
          <DownloadBar />
        </div>
        <Sliver />
      </div>
      <Dock />
    </div>
  );
}
